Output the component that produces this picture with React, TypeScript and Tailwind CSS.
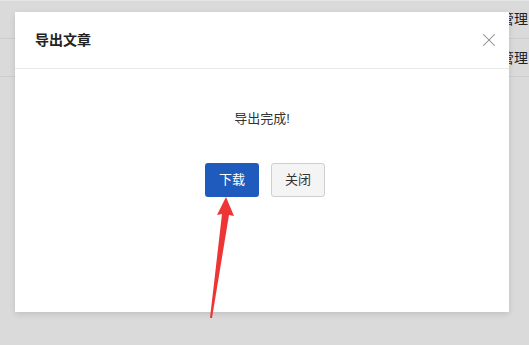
import { X } from "lucide-react";

const font = { fontFamily: '"Liberation Sans", "Noto Sans CJK SC", sans-serif' };

function BackgroundRows() {
    // the table behind the dialog, only its right edge shows
    return (
        <div className="flex flex-col">
            <div className="h-[1px] bg-[#e6e6e6]" />
            <div className="h-[38px] border-b border-[#cdcdcd] pl-[500px] pt-[8px] whitespace-nowrap text-[14px] text-[#222]">管理</div>
            <div className="h-[38px] border-b border-[#cdcdcd] pl-[500px] pt-[9px] whitespace-nowrap text-[14px] text-[#222]">管理</div>
        </div>
    )
}

function Arrow() {
    return (
        <svg className="absolute left-0 top-0 pointer-events-none" width="529" height="345" viewBox="0 0 529 345">
            <polygon points="226,197 234,216 229,215 212,318 210,318 222,214 217,215" fill="#ee3535" />
        </svg>
    )
}

export default function App() {
    return (
        <div className="relative w-[529px] h-[345px] overflow-hidden bg-[#dadada]" style={font}>
            <BackgroundRows />
            <div className="absolute left-[15px] top-[12px] w-[494px] h-[300px] bg-white shadow-[0_2px_6px_rgba(0,0,0,0.12)] flex flex-col">
                <div className="h-[57px] border-b border-[#e9e9e9] pl-[20px] pr-[9px] flex items-center justify-between">
                    <div className="text-[14px] font-bold text-[#222]">导出文章</div>
                    <X size={22} strokeWidth={1.1} className="text-[#8a8a8a]" />
                </div>
                <div className="flex flex-col items-center pt-[40px]">
                    <div className="text-[13px] text-[#333]">导出完成!</div>
                    <div className="flex gap-[12px] mt-[34px] pl-[6px]">
                        <button className="w-[54px] h-[34px] rounded-[3px] bg-[#1f5bbd] text-white text-[13px]">下载</button>
                        <button className="w-[54px] h-[34px] rounded-[3px] bg-[#f4f4f4] border border-[#cfcfcf] text-[#333] text-[13px]">关闭</button>
                    </div>
                </div>
            </div>
            <Arrow />
        </div>
    )
}
